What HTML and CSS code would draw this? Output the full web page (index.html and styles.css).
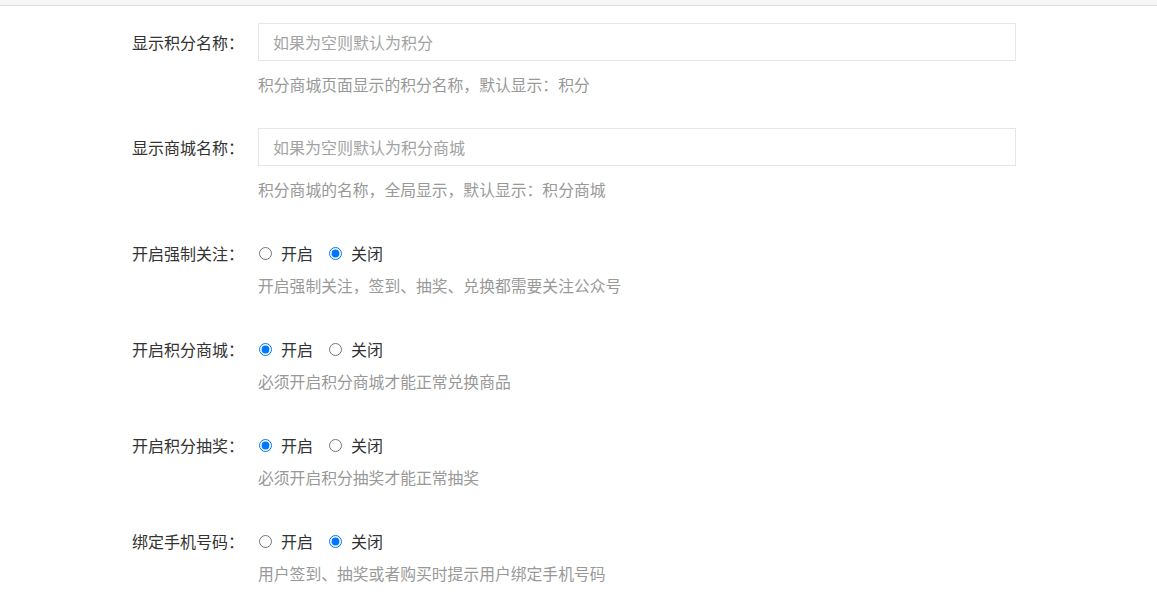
FILE: index.html
```html
<!DOCTYPE html>
<html>
    <head>
        <meta charset="utf-8" />
        <title>积分设置</title>
        <link rel="stylesheet" href="styles.css">
    </head>

    <body>
        <div class="topbar"></div>

        <form class="form">
            <!-- 名称 -->
            <div class="form-group">
                <div class="form-row">
                    <label class="control-label">显示积分名称：</label>
                    <input class="form-control" type="text" placeholder="如果为空则默认为积分" />
                </div>
                <div class="help-block">积分商城页面显示的积分名称，默认显示：积分</div>
            </div>

            <div class="form-group">
                <div class="form-row">
                    <label class="control-label">显示商城名称：</label>
                    <input class="form-control" type="text" placeholder="如果为空则默认为积分商城" />
                </div>
                <div class="help-block">积分商城的名称，全局显示，默认显示：积分商城</div>
            </div>

            <!-- 开关 -->
            <div class="form-group radio-group">
                <div class="form-row">
                    <label class="control-label">开启强制关注：</label>
                    <label class="radio-inline"><input type="radio" name="follow" />开启</label>
                    <label class="radio-inline"><input type="radio" name="follow" checked />关闭</label>
                </div>
                <div class="help-block">开启强制关注，签到、抽奖、兑换都需要关注公众号</div>
            </div>

            <div class="form-group radio-group">
                <div class="form-row">
                    <label class="control-label">开启积分商城：</label>
                    <label class="radio-inline"><input type="radio" name="shop" checked />开启</label>
                    <label class="radio-inline"><input type="radio" name="shop" />关闭</label>
                </div>
                <div class="help-block">必须开启积分商城才能正常兑换商品</div>
            </div>

            <div class="form-group radio-group">
                <div class="form-row">
                    <label class="control-label">开启积分抽奖：</label>
                    <label class="radio-inline"><input type="radio" name="lottery" checked />开启</label>
                    <label class="radio-inline"><input type="radio" name="lottery" />关闭</label>
                </div>
                <div class="help-block">必须开启积分抽奖才能正常抽奖</div>
            </div>

            <div class="form-group radio-group">
                <div class="form-row">
                    <label class="control-label">绑定手机号码：</label>
                    <label class="radio-inline"><input type="radio" name="mobile" />开启</label>
                    <label class="radio-inline"><input type="radio" name="mobile" checked />关闭</label>
                </div>
                <div class="help-block">用户签到、抽奖或者购买时提示用户绑定手机号码</div>
            </div>
        </form>
    </body>
</html>
```

FILE: styles.css
```css
body {
    margin: 0;
    background: #fff;
    color: #333;
    font-family: "Noto Sans CJK SC", "Noto Sans", sans-serif;
    font-size: 16px;
}

.topbar {
    height: 5px;
    background: #f7f7f7;
    border-bottom: 1px solid #dcdcdc;
}

.form {
    padding-top: 17px;
}

.form-group {
    margin-bottom: 33px;
}

.radio-group {
    padding-top: 10px;
}

.form-row {
    display: flex;
    align-items: center;
}

.control-label {
    flex: none;
    width: 258px;
    padding-right: 14px;
    text-align: right;
    box-sizing: border-box;
    line-height: 20px;
    color: #333;
}

.form-control {
    width: 758px;
    height: 38px;
    box-sizing: border-box;
    padding: 0 14px;
    border: 1px solid #e6e6e6;
    font-family: inherit;
    font-size: 16px;
    color: #333;
    outline: none;
}

.form-control::placeholder {
    color: #a3a3a3;
}

.radio-inline {
    display: flex;
    align-items: center;
    line-height: 20px;
    margin-right: 15px;
    color: #333;
}

.radio-inline input {
    width: 13px;
    height: 13px;
    margin: 0 9px 0 1px;
}

.help-block {
    margin-top: 14px;
    margin-left: 258px;
    line-height: 20px;
    font-size: 15.8px;
    color: #999;
}

.radio-group .help-block {
    margin-top: 13px;
}
```
